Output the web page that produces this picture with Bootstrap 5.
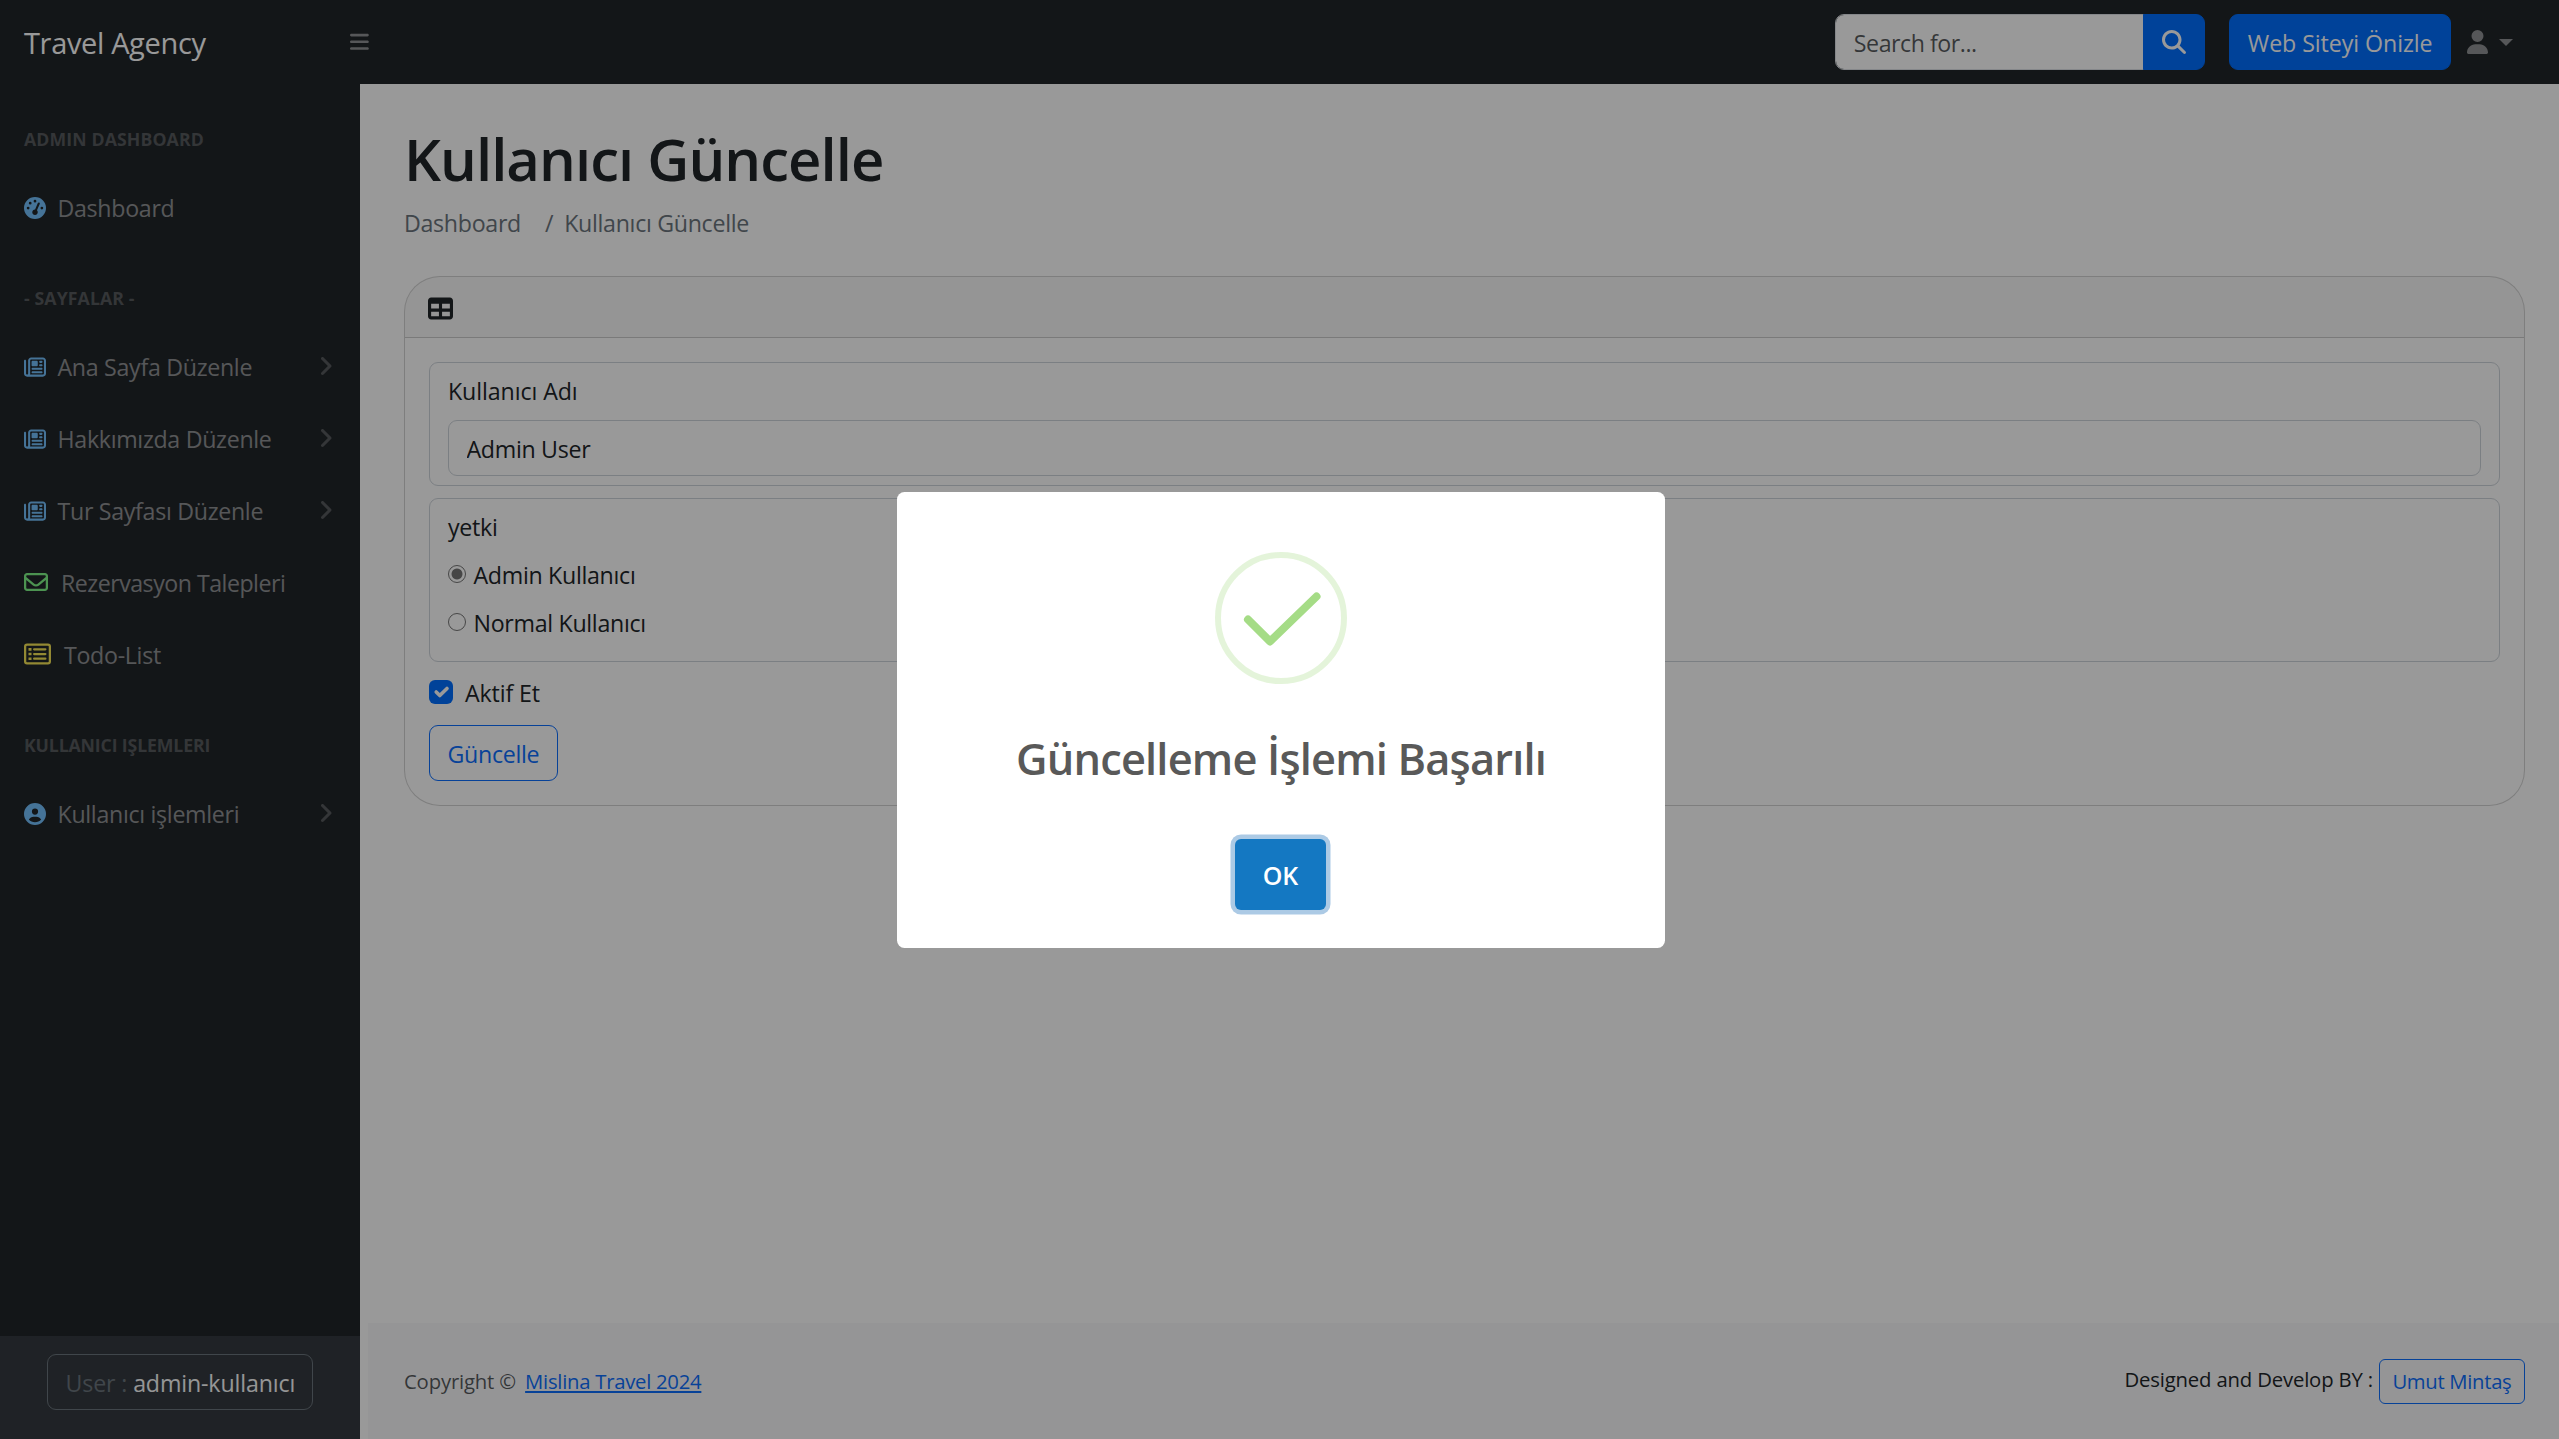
<!DOCTYPE html>
<html lang="tr">
<head>
<meta charset="utf-8">
<meta name="viewport" content="width=device-width, initial-scale=1">
<title>Kullanıcı Güncelle</title>
<link href="https://cdn.jsdelivr.net/npm/bootstrap@5.3.0/dist/css/bootstrap.min.css" rel="stylesheet">
<style>
html{font-size:24px}
body{font-family:"Open Sans","Noto Sans",sans-serif;height:1439px;overflow:hidden;letter-spacing:-.013em;font-size:23.2px;line-height:36px}
.fa{height:1em;width:auto;fill:currentColor;display:block;flex:none}
.topbar{height:84px}
.topbar .navbar-brand{width:350px;font-size:29px;letter-spacing:-.012em;margin:0;padding:2px 0 0 24px}
.topbar .toggler{font-size:21.5px;color:rgba(255,255,255,.5)}
.searchbox{width:370px;margin-right:24px}
.form-control,.btn{font-size:inherit;line-height:36px;letter-spacing:inherit;padding:10px 17.5px 8px;height:56px;color:#212529;white-space:nowrap}
.searchbox .form-control{letter-spacing:-.02em}
.searchbox .btn{width:62px;padding:0 18px;color:#fff}
.btn-primary{--bs-btn-bg:#006eff;--bs-btn-border-color:#006eff;color:#fff}
.btn-preview{letter-spacing:-.003em}
.btn-outline-primary{color:#0d6efd}
.searchbox .fa,.usermenu .fa{font-size:24px}
.usermenu{padding-left:16px;padding-right:46px;color:rgba(255,255,255,.5)}
.caret-down{border:7px solid transparent;border-top:7px solid;border-bottom:0;margin-left:11px}
.sidebar{width:360px}
.side-heading{padding:42px 24px 18px;font-size:17.7px;line-height:27px;font-weight:700;letter-spacing:.006em;color:rgba(255,255,255,.25)}
.side-heading.snug{letter-spacing:-.008em}
.side-link{display:flex;align-items:center;height:72px;padding:0 24px;color:rgba(255,255,255,.5);text-decoration:none}
.side-link .fa{font-size:22px;color:#74c0fc;margin:1px 11.5px 0 0}
.side-link span{padding-top:2px}
.side-link .arrow{margin:0 3px 0 auto;font-size:24px;color:rgba(255,255,255,.25)}
.side-link .ic-mail{font-size:24px;color:#7ff587;margin-right:13px;margin-top:0}
.side-link .ic-list{font-size:24px;color:#f5e556;margin:0 13px 0 0}
.tight{letter-spacing:-.022em}
.side-foot{height:103px;background:#343a40;padding:18px 47px}
.side-foot .btn{width:266px;border-color:#6c757d;color:#6c757d;letter-spacing:-.006em}
.side-foot b{font-weight:400;color:#f8f9fa}
.page{padding-left:8px}
.inner{padding:0 34px 0 36px}
.page-title{font-size:58px;font-weight:600;letter-spacing:-.0165em;line-height:72px;margin:0;padding:38.5px 0 9.5px}
.crumbs{height:36px;margin-bottom:36px;color:#6c757d;padding-top:1px}
.crumbs .sep{margin:0 11px 0 24px}
.formcard{border-radius:36px;overflow:hidden}
.formcard .card-header{height:61px;padding:2px 23px 0;display:flex;align-items:center}
.formcard .card-header .fa{font-size:25px}
.formcard .card-body{padding:24px;height:467px}
.group-box{border:1px solid #ced4da;border-radius:9px;padding:9px 18px;margin-bottom:12px}
.line-item{height:36px;margin-bottom:12px;display:flex;align-items:center}
.line-item span{padding-top:1px}
.check-line{margin-bottom:15px;letter-spacing:-.006em}
.group-box .form-control{border-color:#ced4da}
.label-text{letter-spacing:-.004em}
.radio-dot{width:18px;height:18px;border:1.5px solid #767676;border-radius:50%;margin-right:7.5px;margin-bottom:1px}
.radio-dot.on{background:radial-gradient(circle,#767676 5px,transparent 5.9px)}
.tick{width:24px;height:24px;background:#006eff;border-radius:6px;margin-right:12px}
.foot{height:116px;background:#f8f9fa;font-size:20.3px;letter-spacing:-.008em}
.foot .btn{height:45px;padding:5px 12.5px;line-height:33px;border-radius:6px;letter-spacing:-.015em}
.foot a:not(.btn){color:#0d6efd;margin-left:4px;letter-spacing:-.013em}
.veil{position:fixed;inset:0;z-index:1050;background:rgba(0,0,0,.4);padding-left:3px}
.dialogbox{width:768px;height:456px;margin-top:1px;border-radius:7.5px;background:#fff;color:#595959;padding-top:60px}
.dialog-title{font-size:43.4px;font-weight:600;letter-spacing:-.019em;line-height:54px;margin-top:48px}
.ok-btn{width:91px;height:71px;margin:53px 1px 0 0;background:#1478c2;color:#fff;font-weight:600;font-size:25px;letter-spacing:0;border:0;border-radius:6px;box-shadow:0 0 0 4.5px #accae5;line-height:73px}
</style>
</head>
<body class="d-flex flex-column">
<svg width="0" height="0" class="position-absolute">
<symbol id="news" viewBox="0 0 512 512"><path d="M168 80c-13.3 0-24 10.7-24 24V408c0 8.4-1.4 16.5-4.1 24H440c13.3 0 24-10.7 24-24V104c0-13.3-10.7-24-24-24H168zM72 480c-39.8 0-72-32.2-72-72V112C0 98.7 10.7 88 24 88s24 10.7 24 24V408c0 13.3 10.7 24 24 24s24-10.7 24-24V104c0-39.8 32.2-72 72-72H440c39.8 0 72 32.2 72 72V408c0 39.8-32.2 72-72 72H72zM176 136c0-13.3 10.7-24 24-24h96c13.3 0 24 10.7 24 24v80c0 13.3-10.7 24-24 24H200c-13.3 0-24-10.7-24-24V136zm200-24h32c13.3 0 24 10.7 24 24s-10.7 24-24 24H376c-13.3 0-24-10.7-24-24s10.7-24 24-24zm0 80h32c13.3 0 24 10.7 24 24s-10.7 24-24 24H376c-13.3 0-24-10.7-24-24s10.7-24 24-24zM200 272H408c13.3 0 24 10.7 24 24s-10.7 24-24 24H200c-13.3 0-24-10.7-24-24s10.7-24 24-24zm0 80H408c13.3 0 24 10.7 24 24s-10.7 24-24 24H200c-13.3 0-24-10.7-24-24s10.7-24 24-24z"/></symbol>
<symbol id="angle" viewBox="0 0 320 512"><path d="M278.6 233.4c12.5 12.5 12.5 32.8 0 45.3l-160 160c-12.5 12.5-32.8 12.5-45.3 0s-12.5-32.8 0-45.3L210.7 256 73.4 118.6c-12.5-12.5-12.5-32.8 0-45.3s32.8-12.5 45.3 0l160 160z"/></symbol>
</svg>
<nav class="topbar navbar navbar-dark bg-dark p-0 flex-nowrap flex-shrink-0">
<a class="navbar-brand" href="#">Travel Agency</a>
<div class="toggler me-auto"><svg class="fa" viewBox="0 0 448 512"><path d="M0 96C0 78.3 14.3 64 32 64H416c17.7 0 32 14.3 32 32s-14.3 32-32 32H32C14.3 128 0 113.7 0 96zM0 256c0-17.7 14.3-32 32-32H416c17.7 0 32 14.3 32 32s-14.3 32-32 32H32c-17.7 0-32-14.3-32-32zM448 416c0 17.7-14.3 32-32 32H32c-17.7 0-32-14.3-32-32s14.3-32 32-32H416c17.7 0 32 14.3 32 32z"/></svg></div>
<div class="input-group searchbox flex-nowrap"><input class="form-control" placeholder="Search for..."><button class="btn btn-primary"><svg class="fa" viewBox="0 0 512 512"><path d="M416 208c0 45.9-14.9 88.3-40 122.7L502.6 457.4c12.5 12.5 12.5 32.8 0 45.3s-32.8 12.5-45.3 0L330.7 376c-34.4 25.2-76.8 40-122.7 40C93.1 416 0 322.9 0 208S93.1 0 208 0S416 93.1 416 208zM208 352a144 144 0 1 0 0-288 144 144 0 1 0 0 288z"/></svg></button></div>
<a class="btn btn-primary btn-preview" href="#">Web Siteyi Önizle</a>
<div class="usermenu d-flex align-items-center"><svg class="fa" viewBox="0 0 448 512"><path d="M224 256A128 128 0 1 0 224 0a128 128 0 1 0 0 256zm-45.7 48C79.8 304 0 383.8 0 482.3C0 498.7 13.3 512 29.7 512H418.3c16.4 0 29.7-13.3 29.7-29.7C448 383.8 368.2 304 269.7 304H178.3z"/></svg><i class="caret-down"></i></div>
</nav>
<div class="d-flex flex-grow-1">
<aside class="sidebar bg-dark d-flex flex-column flex-shrink-0">
<div class="side-heading">ADMIN DASHBOARD</div>
<a class="side-link" href="#"><svg class="fa" viewBox="0 0 512 512"><path d="M0 256a256 256 0 1 1 512 0A256 256 0 1 1 0 256zM288 96a32 32 0 1 0 -64 0 32 32 0 1 0 64 0zM256 416c35.3 0 64-28.7 64-64c0-17.4-6.9-33.1-18.1-44.6L366 161.7c5.3-12.1-.2-26.3-12.3-31.6s-26.3 .2-31.6 12.3L257.9 288c-.6 0-1.3 0-1.9 0c-35.3 0-64 28.7-64 64s28.7 64 64 64zM176 144a32 32 0 1 0 -64 0 32 32 0 1 0 64 0zM96 288a32 32 0 1 0 0-64 32 32 0 1 0 0 64zm352-32a32 32 0 1 0 -64 0 32 32 0 1 0 64 0z"/></svg><span>Dashboard</span></a>
<div class="side-heading">- SAYFALAR -</div>
<a class="side-link" href="#"><svg class="fa" viewBox="0 0 512 512"><use href="#news"/></svg><span>Ana Sayfa Düzenle</span><svg class="fa arrow" viewBox="0 0 320 512"><use href="#angle"/></svg></a>
<a class="side-link" href="#"><svg class="fa" viewBox="0 0 512 512"><use href="#news"/></svg><span>Hakkımızda Düzenle</span><svg class="fa arrow" viewBox="0 0 320 512"><use href="#angle"/></svg></a>
<a class="side-link" href="#"><svg class="fa" viewBox="0 0 512 512"><use href="#news"/></svg><span>Tur Sayfası Düzenle</span><svg class="fa arrow" viewBox="0 0 320 512"><use href="#angle"/></svg></a>
<a class="side-link" href="#"><svg class="fa ic-mail" viewBox="0 0 512 512"><path d="M64 112c-8.8 0-16 7.2-16 16v22.1L220.5 291.7c20.7 17 50.4 17 71.1 0L464 150.1V128c0-8.8-7.2-16-16-16H64zM48 212.2V384c0 8.8 7.2 16 16 16H448c8.8 0 16-7.2 16-16V212.2L322 328.8c-38.4 31.5-93.7 31.5-132 0L48 212.2zM0 128C0 92.7 28.7 64 64 64H448c35.3 0 64 28.7 64 64V384c0 35.3-28.7 64-64 64H64c-35.3 0-64-28.7-64-64V128z"/></svg><span class="tight">Rezervasyon Talepleri</span></a>
<a class="side-link" href="#"><svg class="fa ic-list" viewBox="0 0 576 512"><rect x="24" y="56" width="528" height="400" rx="40" fill="none" stroke="currentColor" stroke-width="48"/><path d="M96 128h64v56H96zM96 228h64v56H96zM96 328h64v56H96zM216 132H456a24 24 0 0 1 0 48H216a24 24 0 0 1 0-48zM216 232H456a24 24 0 0 1 0 48H216a24 24 0 0 1 0-48zM216 332H456a24 24 0 0 1 0 48H216a24 24 0 0 1 0-48z"/></svg><span>Todo-List</span></a>
<div class="side-heading snug">KULLANICI IŞLEMLERI</div>
<a class="side-link" href="#"><svg class="fa" viewBox="0 0 512 512"><path d="M399 384.2C376.9 345.8 335.4 320 288 320H224c-47.4 0-88.9 25.8-111 64.2c35.2 39.2 86.2 63.8 143 63.8s107.8-24.7 143-63.8zM0 256a256 256 0 1 1 512 0A256 256 0 1 1 0 256zm256 16a72 72 0 1 0 0-144 72 72 0 1 0 0 144z"/></svg><span>Kullanıcı işlemleri</span><svg class="fa arrow" viewBox="0 0 320 512"><use href="#angle"/></svg></a>
<div class="side-foot mt-auto"><div class="btn">User : <b>admin-kullanıcı</b></div></div>
</aside>
<div class="page d-flex flex-column flex-grow-1">
<main class="inner flex-grow-1">
<h1 class="page-title">Kullanıcı Güncelle</h1>
<div class="crumbs d-flex"><span>Dashboard</span><span class="sep">/</span><span>Kullanıcı Güncelle</span></div>
<div class="card formcard">
<div class="card-header"><svg class="fa" viewBox="0 0 512 512"><path d="M64 256V160H224v96H64zm0 64H224v96H64V320zm224 96V320H448v96H288zM448 256H288V160H448v96zM64 32C28.7 32 0 60.7 0 96V416c0 35.3 28.7 64 64 64H448c35.3 0 64-28.7 64-64V96c0-35.3-28.7-64-64-64H64z"/></svg></div>
<div class="card-body">
<div class="group-box"><div class="line-item"><span class="label-text">Kullanıcı Adı</span></div><input class="form-control" value="Admin User"></div>
<div class="group-box"><div class="line-item"><span>yetki</span></div>
<div class="line-item"><i class="radio-dot on"></i><span>Admin Kullanıcı</span></div>
<div class="line-item"><i class="radio-dot"></i><span>Normal Kullanıcı</span></div></div>
<div class="line-item check-line"><svg class="tick" viewBox="0 0 20 20"><path fill="none" stroke="#fff" stroke-linecap="round" stroke-linejoin="round" stroke-width="3" d="m6 10 3 3 6-6"/></svg><span>Aktif Et</span></div>
<button class="btn btn-outline-primary">Güncelle</button>
</div>
</div>
</main>
<footer class="foot inner d-flex align-items-center justify-content-between">
<div class="text-muted pt-0">Copyright © <a href="#">Mislina Travel 2024</a></div>
<div class="d-flex align-items-center"><span style="padding:0 6px 4px 0">Designed and Develop BY :</span><a class="btn btn-outline-primary" href="#">Umut Mintaş</a></div>
</footer>
</div>
</div>
<div class="veil d-flex align-items-center justify-content-center">
<div class="dialogbox d-flex flex-column align-items-center" role="dialog">
<svg width="132" height="132" viewBox="0 0 132 132" fill="none"><circle cx="66" cy="66" r="63" stroke="#a5dc86" stroke-opacity=".3" stroke-width="6"/><path d="M33 67.500 55 89.500 101.500 44.500" stroke="#a5dc86" stroke-width="8" stroke-linecap="round" stroke-linejoin="round"/></svg>
<div class="dialog-title">Güncelleme İşlemi Başarılı</div>
<button class="ok-btn p-0">OK</button>
</div>
</div>
<script src="https://cdn.jsdelivr.net/npm/bootstrap@5.3.0/dist/js/bootstrap.bundle.min.js"></script>
</body>
</html>
